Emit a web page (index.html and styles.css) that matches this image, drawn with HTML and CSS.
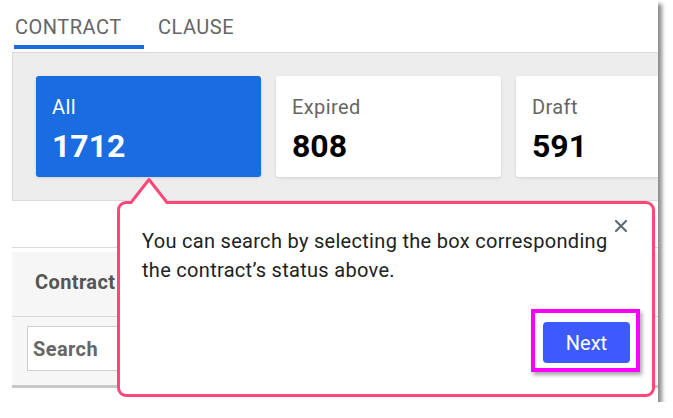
FILE: index.html
```html
<!DOCTYPE html>
<html>

<head>
	<meta charset="utf-8">
	<title>Contracts</title>
	<link rel="stylesheet" href="styles.css">
</head>

<body>
	<div class="window">
		<div class="tabs">
			<div class="tab tab-active">CONTRACT</div>
			<div class="tab">CLAUSE</div>
		</div>
		<div class="status-panel">
			<div class="card card-active">
				<div class="card-label">All</div>
				<div class="card-count">1712</div>
			</div>
			<div class="card">
				<div class="card-label">Expired</div>
				<div class="card-count">808</div>
			</div>
			<div class="card">
				<div class="card-label">Draft</div>
				<div class="card-count">591</div>
			</div>
		</div>
		<div class="list">
			<div class="list-head">Contract</div>
			<div class="list-search">
				<div class="search-box">Search</div>
			</div>
		</div>

		<div class="tip">
			<svg class="tip-arrow" width="36" height="26" viewBox="0 0 36 26">
				<path d="M1 24 L18 1.5 L35 24 L35 26 L1 26 Z" fill="#fff"/>
				<polyline points="0,24.5 18,1.5 36,24.5" fill="none" stroke="#ff4778" stroke-width="3" stroke-linejoin="round"/>
			</svg>
			<svg class="tip-close" width="12" height="12" viewBox="0 0 12 12">
				<path d="M1 1 L11 11 M11 1 L1 11" stroke="#5f6b76" stroke-width="2.2" stroke-linecap="round"/>
			</svg>
			<p class="tip-text">You can search by selecting the box corresponding the contract’s status above.</p>
			<div class="tip-foot">
				<button class="btn-next">Next</button>
			</div>
			<div class="mark"></div>
		</div>
	</div>
</body>

</html>
```

FILE: styles.css
```css
body {
	margin: 0;
	background-color: #fff;
	font-family: Roboto, "Liberation Sans", sans-serif;
}

.window {
	position: relative;
	width: 646px;
	height: 402px;
	padding-left: 12px;
	background-color: #fff;
	box-shadow: 4px 4px 4px rgba(0, 0, 0, 0.45);
	overflow: hidden;
}

.tabs {
	display: flex;
	height: 52px;
	padding-left: 2px;
}

.tab {
	box-sizing: border-box;
	height: 49px;
	padding: 15px 0 0 1px;
	font-size: 20px;
	line-height: 24px;
	letter-spacing: 0.5px;
	color: #666;
}

.tab-active {
	width: 130px;
	margin-right: 13px;
	border-bottom: 4px solid #1a6ce0;
}

.status-panel {
	display: flex;
	gap: 15px;
	height: 149px;
	padding: 23px 0 0 23px;
	box-sizing: border-box;
	background-color: #ededed;
	border-top: 1px solid #dcdcdc;
	border-left: 1px solid #dcdcdc;
	border-bottom: 1px solid #dcdcdc;
}

.card {
	flex: none;
	box-sizing: border-box;
	width: 225px;
	height: 101px;
	padding: 20px 0 0 16px;
	background-color: #fff;
	border-radius: 3px;
	box-shadow: 0 1px 3px rgba(0, 0, 0, 0.12);
}

.card-label {
	font-size: 20px;
	line-height: 22px;
	letter-spacing: 0.4px;
	color: #666;
}

.card-count {
	margin-top: 9px;
	font-size: 32px;
	line-height: 38px;
	font-weight: bold;
	color: #000;
}

.card-active {
	background-color: #1a6ce0;
}

.card-active .card-label,
.card-active .card-count {
	color: #fff;
}

.list {
	margin-top: 46px;
	border-top: 1px solid #dadada;
	padding-top: 4px;
}

.list-head {
	box-sizing: border-box;
	height: 65px;
	padding: 19px 0 0 23px;
	font-size: 20px;
	line-height: 22px;
	letter-spacing: 0.4px;
	font-weight: bold;
	color: #555;
	background-color: #f6f6f6;
	border-bottom: 1px solid #d8d8d8;
}

.list-search {
	height: 59px;
	padding: 9px 0 0 15px;
	background-color: #f6f6f6;
	border-bottom: 3px solid #c8c8c8;
}

.search-box {
	box-sizing: border-box;
	width: 300px;
	height: 45px;
	padding: 11px 0 0 5px;
	font-size: 20px;
	line-height: 22px;
	letter-spacing: 0.4px;
	font-weight: bold;
	color: #666;
	background-color: #fff;
	border: 1px solid #cfcfcf;
}

.tip {
	position: absolute;
	left: 117px;
	top: 201px;
	box-sizing: border-box;
	width: 538px;
	height: 196px;
	display: flex;
	flex-direction: column;
	background-color: #fff;
	border: 3px solid #ff4778;
	border-radius: 9px;
}

.tip-arrow {
	position: absolute;
	left: 11px;
	top: -26px;
}

.tip-close {
	position: absolute;
	left: 495px;
	top: 16px;
}

.tip-text {
	margin: 0;
	padding: 23px 30px 0 22px;
	font-size: 20px;
	line-height: 29px;
	letter-spacing: 0.3px;
	color: #222;
}

.tip-foot {
	display: flex;
	justify-content: flex-end;
	margin-top: auto;
	padding: 0 22px 31px 0;
}

.btn-next {
	width: 87px;
	height: 41px;
	border: none;
	border-radius: 4px;
	background-color: #3d5afe;
	color: #fff;
	font-family: Roboto, "Liberation Sans", sans-serif;
	font-size: 20px;
}

.mark {
	position: absolute;
	left: 411px;
	top: 105px;
	box-sizing: border-box;
	width: 109px;
	height: 63px;
	border: 4px solid #ff00ff;
	box-shadow: 2px 3px 4px rgba(0, 0, 0, 0.35);
}
```
